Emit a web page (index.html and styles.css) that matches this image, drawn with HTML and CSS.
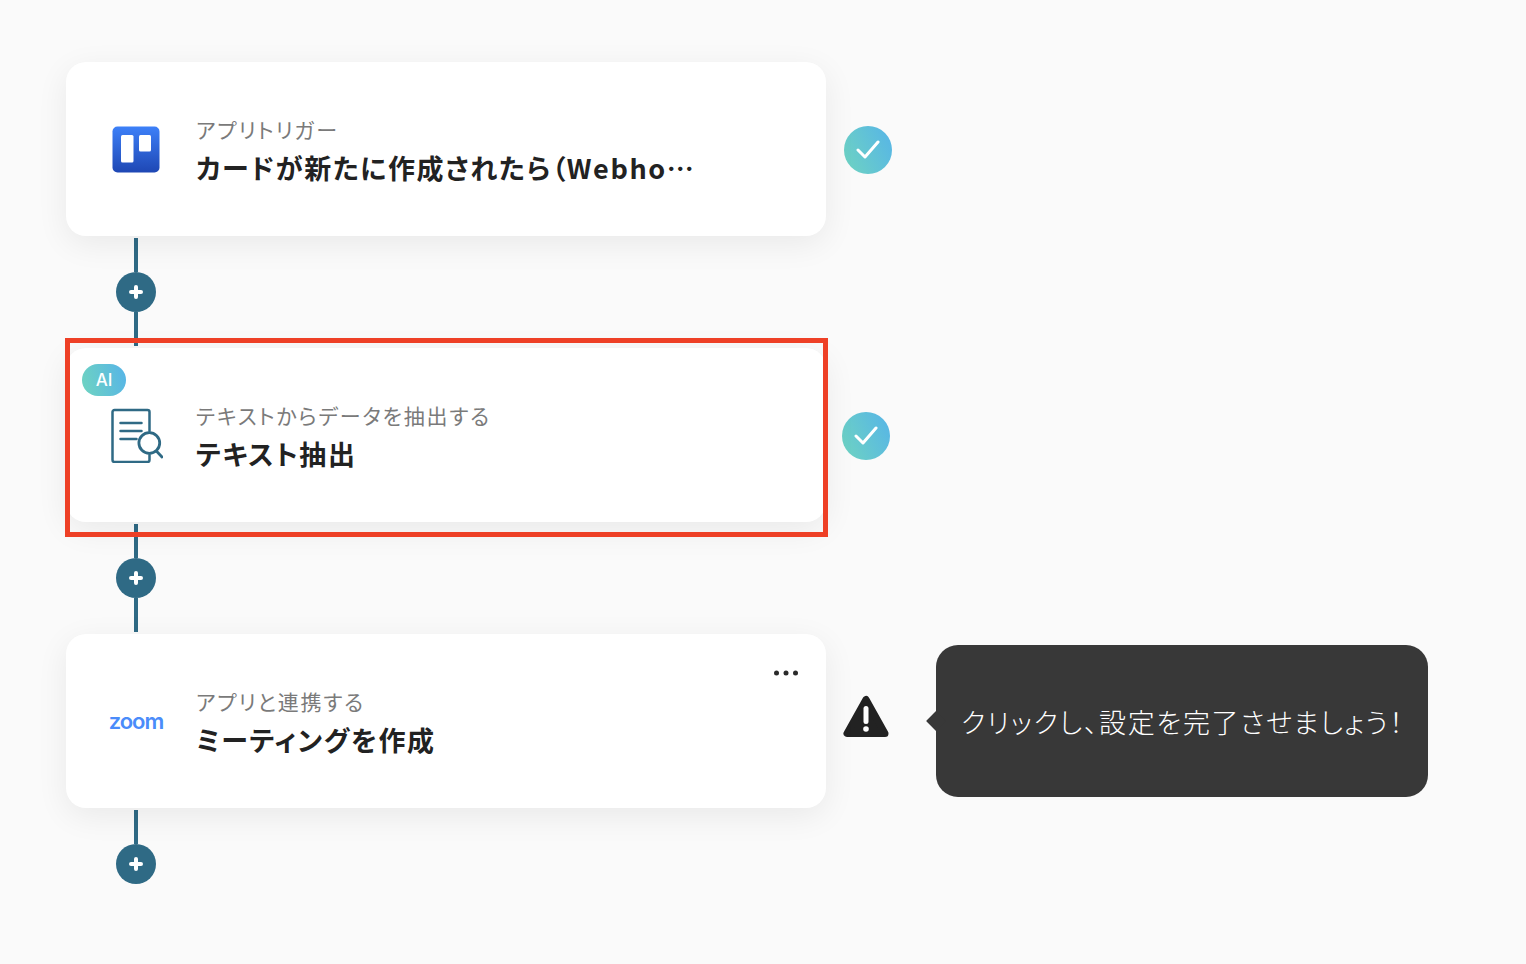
FILE: index.html
```html
<!DOCTYPE html>
<html lang="ja">
  <head>
    <meta charset="UTF-8" />
    <title>フロー</title>
    <link rel="stylesheet" href="styles.css">
  </head>
  <body>
    <div class="flow">
      <div class="step">
        <div class="card">
          <div class="card-icon">
            <svg width="48" height="48" viewBox="0 0 48 48">
              <defs>
                <linearGradient id="trelloBg" x1="0" y1="0" x2="0" y2="1">
                  <stop offset="0" stop-color="#3d80f8" />
                  <stop offset="1" stop-color="#1e47b4" />
                </linearGradient>
              </defs>
              <rect x="0.5" y="1.500" width="47" height="46" rx="5" fill="url(#trelloBg)" />
              <rect x="9" y="10" width="12.500" height="27.500" rx="1.500" fill="#fff" />
              <rect x="27" y="10" width="12" height="16.500" rx="1.500" fill="#fff" />
            </svg>
          </div>
          <div class="card-text">
            <div class="card-sub">アプリトリガー</div>
            <div class="card-title">カードが新たに作成されたら（Webho…</div>
          </div>
        </div>
        <div class="status status-ok">
          <svg width="24" height="20" viewBox="0 0 24 20"><path d="M2 10l7 7L22 2" fill="none" stroke="#fff" stroke-width="3" stroke-linecap="round" stroke-linejoin="round" /></svg>
        </div>
      </div>

      <div class="connector">
        <div class="line"></div>
        <div class="add"></div>
        <div class="line"></div>
      </div>

      <div class="step step-ai">
        <div class="card">
          <span class="ai-badge">AI</span>
          <div class="card-icon">
            <svg width="54" height="56" viewBox="0 0 54 56" fill="none" stroke="#2f6a85" stroke-width="2.500" stroke-linecap="round">
              <path d="M40.500 24V5a2 2 0 0 0-2-2h-33a2 2 0 0 0-2 2v48a2 2 0 0 0 2 2h33a2 2 0 0 0 2-2v-5" />
              <path d="M11.500 16h21M11.500 24h21M11.500 32h16" />
              <circle cx="40.300" cy="36" r="10.400" stroke-width="2.800" />
              <path d="M47.800 44.500l5.200 5.500" stroke-width="2.800" />
            </svg>
          </div>
          <div class="card-text">
            <div class="card-sub">テキストからデータを抽出する</div>
            <div class="card-title">テキスト抽出</div>
          </div>
          <div class="highlight"></div>
        </div>
        <div class="status status-ok">
          <svg width="24" height="20" viewBox="0 0 24 20"><path d="M2 10l7 7L22 2" fill="none" stroke="#fff" stroke-width="3" stroke-linecap="round" stroke-linejoin="round" /></svg>
        </div>
      </div>

      <div class="connector">
        <div class="line"></div>
        <div class="add"></div>
        <div class="line"></div>
      </div>

      <div class="step step-ai">
        <div class="card">
          <svg class="card-menu" width="26" height="6" viewBox="0 0 26 6" fill="#2a2a2a">
            <circle cx="3.500" cy="3" r="2.500" />
            <circle cx="13" cy="3" r="2.500" />
            <circle cx="22.500" cy="3" r="2.500" />
          </svg>
          <div class="card-icon"><span class="zoom-logo">zoom</span></div>
          <div class="card-text">
            <div class="card-sub">アプリと連携する</div>
            <div class="card-title">ミーティングを作成</div>
          </div>
        </div>
        <div class="status status-warn">
          <svg width="48" height="48" viewBox="0 0 48 48">
            <path d="M24 4.500L5 38.500h38z" fill="#222" stroke="#222" stroke-width="7" stroke-linejoin="round" />
            <path d="M24 13.500v13" stroke="#fff" stroke-width="5" stroke-linecap="round" />
            <circle cx="24" cy="34" r="2.800" fill="#fff" />
          </svg>
        </div>
        <div class="tip">クリックし、設定を完了させましょう！</div>
      </div>

      <div class="connector">
        <div class="line"></div>
        <div class="add"></div>
      </div>
    </div>
  </body>
</html>
```

FILE: styles.css
```css
body {
  margin: 0;
  height: 964px;
  overflow: hidden;
  background-color: #fafafa;
  font-family: "Noto Sans CJK JP", "Noto Sans", sans-serif;
  font-feature-settings: "palt";
}

.flow {
  padding: 62px 0 0 66px;
}

.step {
  display: flex;
  align-items: center;
  gap: 18px;
}

.step-ai {
  gap: 16px;
}

.card {
  position: relative;
  display: flex;
  align-items: center;
  box-sizing: border-box;
  width: 760px;
  height: 174px;
  padding-left: 40px;
  background-color: #fff;
  border-radius: 20px;
  box-shadow: 0 8px 32px rgba(0, 0, 0, 0.07);
}

.card-icon {
  display: flex;
  justify-content: center;
  align-items: center;
  flex-shrink: 0;
  width: 60px;
  margin-right: 30px;
}

.card-text {
  width: 498px;
  padding-top: 2px;
}

.card-sub {
  font-size: 21px;
  line-height: 30px;
  letter-spacing: 1.8px;
  color: #7a7a7a;
}

.card-title {
  margin-top: 5px;
  font-size: 27px;
  line-height: 38px;
  font-weight: 700;
  letter-spacing: 1.6px;
  color: #222;
  white-space: nowrap;
}

.card-menu {
  position: absolute;
  top: 36px;
  right: 27px;
}

.zoom-logo {
  font-family: "Inter", sans-serif;
  font-size: 22px;
  font-weight: 600;
  letter-spacing: -1px;
  color: #4a8cfa;
}

.ai-badge {
  position: absolute;
  top: 16px;
  left: 16px;
  width: 44px;
  height: 32px;
  border-radius: 16px;
  background: linear-gradient(75deg, #6fd4c0, #56b4e8);
  color: #fff;
  font-family: "Inter", sans-serif;
  font-size: 17px;
  font-weight: 500;
  line-height: 32px;
  text-align: center;
}

.highlight {
  position: absolute;
  top: -10px;
  left: -1px;
  right: -2px;
  bottom: -15px;
  border: 5px solid #ee4026;
}

.status {
  display: flex;
  justify-content: center;
  align-items: center;
  flex-shrink: 0;
  width: 48px;
  height: 48px;
}

.status-ok {
  margin-top: 2px;
  border-radius: 50%;
  background: linear-gradient(65deg, #6fd4c0, #56b4e8);
}

.status-warn {
  margin-top: -4px;
}

.tip {
  position: relative;
  box-sizing: border-box;
  width: 492px;
  height: 152px;
  margin-left: 30px;
  padding-left: 25px;
  background-color: #383838;
  border-radius: 22px;
  color: #fff;
  font-size: 27px;
  font-weight: 300;
  line-height: 154px;
  letter-spacing: 1.65px;
  white-space: nowrap;
}

.tip::before {
  content: "";
  position: absolute;
  top: 69px;
  left: -7px;
  width: 14px;
  height: 14px;
  background-color: #383838;
  transform: rotate(45deg);
}

.connector {
  display: flex;
  flex-direction: column;
  align-items: center;
  box-sizing: border-box;
  width: 140px;
  height: 112px;
  padding-top: 2px;
}

.line {
  width: 4px;
  height: 34px;
  background-color: #2f6a85;
}

.add {
  position: relative;
  flex-shrink: 0;
  width: 40px;
  height: 40px;
  border-radius: 50%;
  background-color: #2f6a85;
}

.add::before,
.add::after {
  content: "";
  position: absolute;
  top: 18px;
  left: 13px;
  width: 14px;
  height: 4px;
  border-radius: 2px;
  background-color: #fff;
}

.add::after {
  transform: rotate(90deg);
}
```
